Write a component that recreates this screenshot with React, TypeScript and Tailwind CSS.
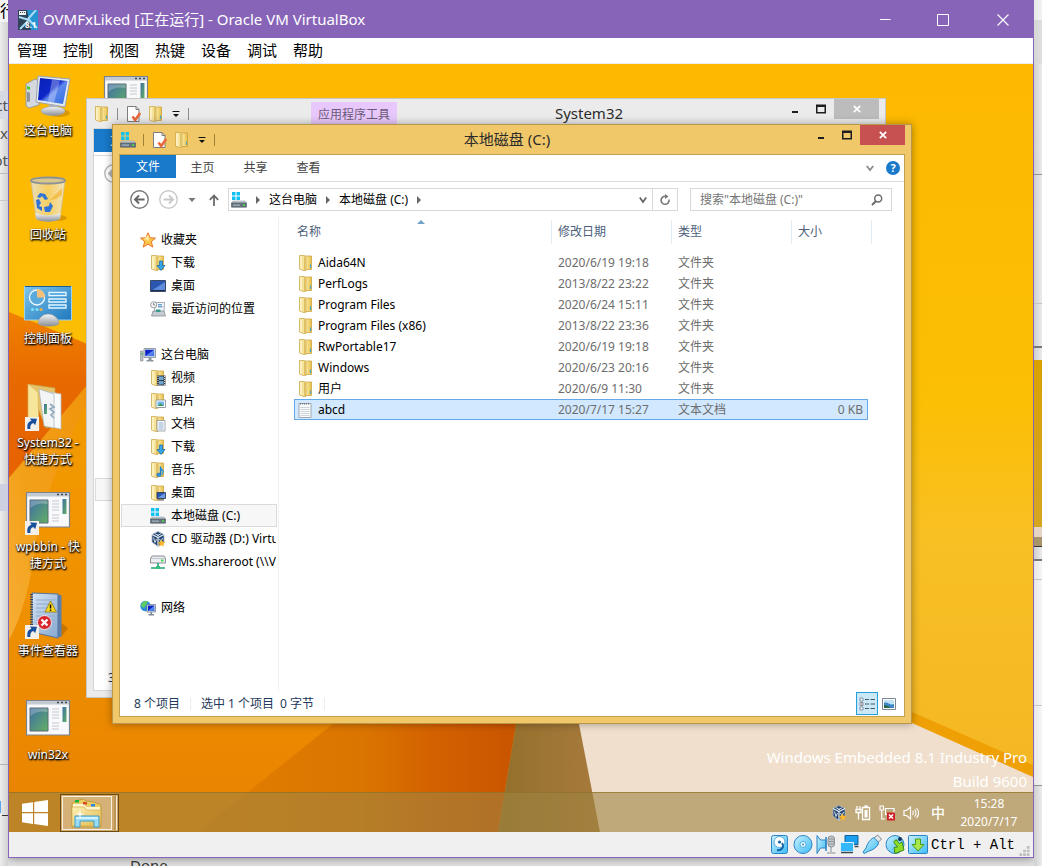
import React from "react";

const font = "font-['Noto_Sans','Noto_Sans_CJK_SC',sans-serif]";

/* ---------- shared gradients ---------- */

function Defs() {
  return (
    <svg className="absolute h-0 w-0" aria-hidden="true">
      <defs>
        <linearGradient id="folder" x1="0" x2="1" y1="0" y2="1">
          <stop offset="0" stopColor="#fdf0b4" />
          <stop offset="1" stopColor="#e2b94e" />
        </linearGradient>
        <linearGradient id="folderFront" x1="0" x2="1" y1="0" y2="0">
          <stop offset="0" stopColor="#d9a93a" />
          <stop offset="0.3" stopColor="#fbe9a0" />
          <stop offset="1" stopColor="#e6bd47" />
        </linearGradient>
        <linearGradient id="screen" x1="0" x2="1" y1="0" y2="1">
          <stop offset="0" stopColor="#0a1fb8" />
          <stop offset="0.45" stopColor="#0d27c9" />
          <stop offset="0.55" stopColor="#5f86ee" />
          <stop offset="1" stopColor="#2f6fe0" />
        </linearGradient>
        <linearGradient id="metal" x1="0" x2="0" y1="0" y2="1">
          <stop offset="0" stopColor="#f6f6f6" />
          <stop offset="1" stopColor="#8b9096" />
        </linearGradient>
        <linearGradient id="appPane" x1="0" x2="1" y1="0" y2="1">
          <stop offset="0" stopColor="#3f6fa6" />
          <stop offset="1" stopColor="#62b062" />
        </linearGradient>
        <linearGradient id="panel" x1="0" x2="1" y1="0" y2="1">
          <stop offset="0" stopColor="#7cc4ec" />
          <stop offset="1" stopColor="#1f78bd" />
        </linearGradient>
        <linearGradient id="glass" x1="0" x2="1" y1="0" y2="0">
          <stop offset="0" stopColor="#e6e2cf" stopOpacity="0.9" />
          <stop offset="0.5" stopColor="#f5d88c" stopOpacity="0.7" />
          <stop offset="1" stopColor="#efe9d5" stopOpacity="0.9" />
        </linearGradient>
        <linearGradient id="sky" x1="0" x2="1" y1="0" y2="1">
          <stop offset="0" stopColor="#c8f1ff" />
          <stop offset="1" stopColor="#3cbcf5" />
        </linearGradient>
        <linearGradient id="book" x1="0" x2="1" y1="0" y2="1">
          <stop offset="0" stopColor="#d5e3f2" />
          <stop offset="1" stopColor="#86a8cf" />
        </linearGradient>
      </defs>
    </svg>
  );
}

/* ---------- wallpaper ---------- */

function Wallpaper() {
  return (
    <svg
      className="absolute inset-0 h-full w-full"
      viewBox="0 0 1024 768"
      preserveAspectRatio="none"
      aria-hidden="true"
    >
      <defs>
        <linearGradient id="wpBase" x1="0" x2="0" y1="0" y2="1">
          <stop offset="0" stopColor="#fdb900" />
          <stop offset="0.45" stopColor="#fbbf06" />
          <stop offset="0.62" stopColor="#f8c024" />
          <stop offset="0.9" stopColor="#f5b824" />
        </linearGradient>
        <linearGradient id="wpLeft" x1="0" x2="0" y1="0" y2="1">
          <stop offset="0" stopColor="#f59e00" />
          <stop offset="0.6" stopColor="#ee8f00" />
          <stop offset="1" stopColor="#e88200" />
        </linearGradient>
        <linearGradient id="wpFold" x1="0" x2="1" y1="0" y2="0">
          <stop offset="0" stopColor="#e27f00" />
          <stop offset="0.5" stopColor="#da7500" />
          <stop offset="0.7" stopColor="#d46200" />
          <stop offset="1" stopColor="#c85200" />
        </linearGradient>
        <linearGradient id="wpDark" x1="0" x2="0" y1="0" y2="1">
          <stop offset="0" stopColor="#f08200" />
          <stop offset="0.4" stopColor="#e86900" />
          <stop offset="1" stopColor="#e66200" />
        </linearGradient>
        <linearGradient id="wpBrown" x1="0" x2="1" y1="0" y2="0">
          <stop offset="0" stopColor="#93702c" />
          <stop offset="1" stopColor="#a87a3c" />
        </linearGradient>
        <linearGradient id="wpWedge" x1="1" x2="0" y1="0" y2="1">
          <stop offset="0" stopColor="#f0940a" />
          <stop offset="0.6" stopColor="#f3a11a" />
          <stop offset="1" stopColor="#f7ae34" />
        </linearGradient>
      </defs>
      <rect width="1024" height="768" fill="url(#wpBase)" />
      <path d="M0 414 105 280 600 280 490 768 0 768Z" fill="url(#wpLeft)" />
      <path d="M0 248 108 292 0 414Z" fill="url(#wpDark)" />
      <path d="M0 414 78 321 78 340Q45 400 28 470 20 540 0 576Z" fill="url(#wpWedge)" />
      <path d="M520 490 324 660 189 768 489 768 507 660Z" fill="url(#wpFold)" />
      <path d="M507 660 540 480 591 768 489 768Z" fill="url(#wpBrown)" />
      <path d="M570 660 560 560 903 650 1024 704 1024 768 591 768Z" fill="#f0dfcd" />
      <path d="M880 638 1024 701 1024 713 903 659 880 650Z" fill="#efa004" />
    </svg>
  );
}

/* ---------- small icons (16px) ---------- */

function FolderIcon({ children }: { children?: React.ReactNode }) {
  return (
    <svg viewBox="0 0 16 16" className="h-4 w-4 shrink-0" aria-hidden="true">
      <path d="M6 1h7.500v13.500H6z" fill="url(#folderFront)" stroke="#c99e35" strokeWidth=".7" />
      <path d="M1.500.5H6l2 1.500v13.500l-2 .3-4.500-1.800z" fill="#f6e39a" stroke="#c9a243" strokeWidth=".7" />
      <path d="M3 1.500v12.500" stroke="#fff6cf" strokeWidth="1.400" />
      <path d="M6.800 2v13" stroke="#d8b04a" strokeWidth="1" />
      <path d="M12.500 9.500v3.500" stroke="#4fa7c4" strokeWidth="1.200" />
      {children}
    </svg>
  );
}

const DownloadFolder = () => (
  <FolderIcon>
    <path d="M9.500 6h3v4.500h2.500L11 15.500 7 10.500h2.500z" fill="#35a6ea" stroke="#1167a8" strokeWidth=".7" />
  </FolderIcon>
);
const VideoFolder = () => (
  <FolderIcon>
    <path d="M7 5.500h8.500v10H7z" fill="#333a44" />
    <path d="M9 6.500h4.500v3.500H9zM9 11h4.500v3.500H9z" fill="#6fa6d2" />
    <path d="M8 6v9.500M14.600 6v9.500" stroke="#fff" strokeWidth=".9" strokeDasharray="1 1" />
  </FolderIcon>
);
const PictureFolder = () => (
  <FolderIcon>
    <path d="M6 7h9.500v7.500H6z" fill="#fff" stroke="#7f8c96" strokeWidth=".8" />
    <path d="M7.500 8.500h6.500v4.500H7.500z" fill="#6cb6e8" />
    <path d="m7.500 13 3-2.500 3.500 2.500z" fill="#3d9a5b" />
  </FolderIcon>
);
const DocFolder = () => (
  <FolderIcon>
    <path d="M7 4.500h8v10.500H7z" fill="#fff" stroke="#8b949c" strokeWidth=".8" />
    <path d="M8.500 7h5M8.500 9h5M8.500 11h5M8.500 13h5" stroke="#6c93c0" strokeWidth=".8" />
  </FolderIcon>
);
const MusicFolder = () => (
  <FolderIcon>
    <path d="M10.500 4.500v7.500" stroke="#1878c8" strokeWidth="1.400" />
    <path d="M10.500 4.500c1 3 4 3 3.500 7-.5-2-2-2.500-3.500-3z" fill="#2a95e2" />
    <ellipse cx="9" cy="12.800" rx="2.300" ry="1.800" fill="#2a95e2" stroke="#115c9c" strokeWidth=".5" />
  </FolderIcon>
);
const DesktopFolder = () => (
  <FolderIcon>
    <path d="M7 7.500h8.500v6H7z" fill="#2a56b4" stroke="#22344f" strokeWidth=".8" />
    <path d="m7.500 13 7.500-5v5z" fill="#6f9be0" />
    <path d="M8 15h6" stroke="#58616c" />
  </FolderIcon>
);
const StarIcon = () => (
  <svg viewBox="0 0 16 16" className="h-4 w-4 shrink-0" aria-hidden="true">
    <path
      d="m8 .8 2.200 5 5.300.3-4.200 3.500 1.500 5.500L8 12.200l-4.800 2.900 1.500-5.500L.5 6.100l5.300-.3z"
      fill="#fdc648"
      stroke="#e2762a"
      strokeWidth="1"
      strokeLinejoin="round"
    />
    <path d="m8 3 1.300 3.500L8 9 4 7z" fill="#ffe9a0" />
  </svg>
);
const DesktopIcon = () => (
  <svg viewBox="0 0 16 16" className="h-4 w-4 shrink-0" aria-hidden="true">
    <path d="M.5 2.500h15v11H.5z" fill="#2a57b0" stroke="#3a4a66" />
    <path d="m1 13 14-9v9z" fill="#5f8ddb" />
    <path d="M1 12.500h14" stroke="#1b2c4a" />
  </svg>
);
const RecentIcon = () => (
  <svg viewBox="0 0 16 16" className="h-4 w-4 shrink-0" aria-hidden="true">
    <path d="M5 1.500h9.500l-.5 9H4.500z" fill="#f7f9fb" stroke="#8a949e" strokeWidth=".8" />
    <path d="M8 3.800h4M8 5.800h4.500" stroke="#2e7bc4" />
    <path d="M3 10h11l1.500 5H1.500z" fill="#c6ccd2" stroke="#868e96" strokeWidth=".8" />
    <path d="M6 8.500h4.500v2.500H6z" fill="#3a9a8a" />
    <circle cx="3.700" cy="3.800" r="3.100" fill="#f5f5f5" stroke="#8d949b" strokeWidth=".9" />
    <path d="M3.700 2v2h1.500" stroke="#555" strokeWidth=".7" fill="none" />
  </svg>
);
const ComputerIcon = () => (
  <svg viewBox="0 0 16 16" className="h-4 w-4 shrink-0" aria-hidden="true">
    <path d="M.5 4h2.500v10H.5z" fill="#b9c0c7" stroke="#7d858d" strokeWidth=".6" />
    <path d="M1 6h1.500v1.500H1z" fill="#35c235" />
    <path d="M4 1.500h11.500v9H4z" fill="#dfe5eb" stroke="#7c8894" strokeWidth=".8" />
    <path d="M5.200 2.700h9v6.500h-9z" fill="url(#screen)" />
    <path d="M8.500 11h3v2h2v1.500h-7V13h2z" fill="#8a949d" />
  </svg>
);
const DriveIcon = () => (
  <svg viewBox="0 0 16 16" className="h-4 w-4 shrink-0" aria-hidden="true">
    <path d="M1 0h3.500v3.500H1zM5.500 0H9v3.500H5.500zM1 4.500h3.500V8H1zM5.500 4.500H9V8H5.500z" fill="#12c0f2" />
    <path d="M2 9h12l1.500 2H.5z" fill="#c8d0d6" stroke="#87919a" strokeWidth=".5" />
    <path d="M.5 11h15v4.200H.5z" fill="#66727d" stroke="#4d5862" strokeWidth=".6" />
    <path d="M2 12.500h7v1.300H2z" fill="#9fb3c2" />
    <path d="M12 12.300h2v1.700h-2z" fill="#45d845" />
  </svg>
);
const CubeIcon = () => (
  <svg viewBox="0 0 16 16" className="h-4 w-4 shrink-0" aria-hidden="true">
    <path d="m8 .5 6 3v7.500l-6 4.500-6-4.500V3.500z" fill="#27466f" stroke="#a9b6c9" strokeWidth=".8" />
    <path d="m2 3.500 6 3 6-3M8 6.500v9" stroke="#e6edf5" strokeWidth="1.200" fill="none" />
    <path d="m3.500 6.500 1.500 5 1.500-3.500M9.500 8l1.500 3 1.500-4M5 2.700l4 2.100M11 2.700 7 4.800" stroke="#d3deec" fill="none" />
    <path d="m11.500 8.500 1.200 2.300 2.800.2-2 1.800.6 2.700-2.600-1.300-2.500 1.300.6-2.700-2-1.800 2.700-.2z" fill="#f8b72c" />
  </svg>
);
const NetDriveIcon = () => (
  <svg viewBox="0 0 16 16" className="h-4 w-4 shrink-0" aria-hidden="true">
    <path d="M2 2h12l1.500 2.500v4.500H.5V4.500z" fill="#eceff1" stroke="#6c757d" strokeWidth=".8" />
    <path d="M.5 4.500h15" stroke="#a8b0b8" strokeWidth=".6" />
    <path d="M11 5.500h2.500v2H11z" fill="#45d845" />
    <path d="M8 9v4.500M1 14h14" stroke="#23a46c" strokeWidth="1.600" />
    <path d="M6 12h4v3H6z" fill="#35bd82" />
  </svg>
);
const NetworkIcon = () => (
  <svg viewBox="0 0 16 16" className="h-4 w-4 shrink-0" aria-hidden="true">
    <circle cx="5.500" cy="6" r="5.200" fill="#2b8fd8" />
    <path d="M2 3c2-2 5-2.500 6-1.500L6 5 4 8 1 6z" fill="#5fce5f" />
    <path d="M7 4.500h8.500v7.500H7z" fill="#dfe5eb" stroke="#6c7782" strokeWidth=".7" />
    <path d="M8 5.500h6.500v5.500H8z" fill="url(#screen)" />
    <path d="M10.500 12h1.500v2h2v1.500H8.500V14h2z" fill="#7c8894" />
  </svg>
);
const TextFileIcon = () => (
  <svg viewBox="0 0 16 16" className="h-4 w-4 shrink-0" aria-hidden="true">
    <path d="M1 1.500h12V15.500H1z" fill="#fafafa" stroke="#8f979f" strokeWidth=".8" />
    <path d="M2.500 5.500h9M2.500 7.500h9M2.500 9.500h9M2.500 11.500h9M2.500 13.500h9" stroke="#c3cbd2" strokeWidth=".8" />
    <path d="M2 1.800h10" stroke="#6d757d" strokeWidth="1.600" strokeDasharray="1 1" />
  </svg>
);
const PropertiesIcon = () => (
  <svg viewBox="0 0 16 16" className="h-4 w-4 shrink-0" aria-hidden="true">
    <path d="M1.500.5h8.500l3 3v12H1.500z" fill="#fff" stroke="#7d7d7d" />
    <path d="M10 .5v3h3" fill="none" stroke="#7d7d7d" />
    <path d="m6.500 10.500 2.700 3.500 5-7" fill="none" stroke="#e8683c" strokeWidth="2.600" />
  </svg>
);

/* ---------- desktop icons (48px) ---------- */

const ShortcutArrow = () => (
  <g>
    <path d="M1 33h14v14H1z" fill="#f3f0ea" />
    <path d="M3.500 45c-1-6 2-8 4-8l-1.500-2.500 7 .3-1.800 6.400-1.500-2c-2 0-4 1.800-3.200 5.800z" fill="#184f9c" />
  </g>
);

function AppGlyph({ shortcut }: { shortcut?: boolean }) {
  return (
    <svg viewBox="0 0 48 48" className="h-12 w-12" aria-hidden="true">
      <path d="M2.500 4.500h43V39h-43z" fill="#f8f9fa" stroke="#7b848e" strokeWidth="1.200" />
      <path d="M3 5h42v3.500H3z" fill="#c3cad1" />
      <path d="M33 6.500h2m2 0h2m2 0h2" stroke="#3f4850" strokeWidth="1.500" />
      <path d="M6 12h18v23H6z" fill="url(#appPane)" stroke="#5b6a76" />
      <path d="M6.500 20C12 15 18 15 23.500 16V12.500h-17z" fill="#fff" fillOpacity=".25" />
      <path d="M28 13h7M28 16h7M28 19h7M28 22h7M28 27h7M28 30h7M28 33h7" stroke="#c4c8cc" />
      <path d="M38.500 11h4v15h-4z" fill="url(#appPane)" />
      {shortcut && <ShortcutArrow />}
    </svg>
  );
}

const PcGlyph = () => (
  <svg viewBox="0 0 48 48" className="h-12 w-12" aria-hidden="true">
    <ellipse cx="35" cy="41" rx="11" ry="4" fill="#a56a00" fillOpacity=".4" />
    <path d="m2 12 9-5 4 2v24l-10 3-3-2z" fill="#d5d9dd" stroke="#8a9097" strokeWidth=".8" />
    <path d="m3 14 3 1v3l-3-1z" fill="#44d12b" />
    <path d="m3 20 3 .6v9L3 30z" fill="#8d949b" />
    <path d="m14 4 32 3-5 28-29-5z" fill="#e6eaee" stroke="#9aa4ae" />
    <path d="m16 6 27.500 3-4.500 23-25-4z" fill="url(#screen)" />
    <path d="m28 7.500 8 1-6 22-6-1z" fill="#fff" fillOpacity=".3" />
    <path d="m25 32 9 1.500-1 5h-7z" fill="#aab1b8" />
    <ellipse cx="29" cy="39" rx="12" ry="4.500" fill="url(#metal)" stroke="#9ba1a7" strokeWidth=".6" />
  </svg>
);
const RecycleGlyph = () => (
  <svg viewBox="0 0 48 48" className="h-12 w-12" aria-hidden="true">
    <ellipse cx="34" cy="42" rx="9" ry="3" fill="#a56a00" fillOpacity=".4" />
    <path d="m7 4 5 38c4 4 20 4 24 0l5-38z" fill="url(#glass)" stroke="#cfc39a" strokeWidth=".8" />
    <path d="m11.500 37 .7 6c4 3.500 19 3.500 23.500 0l.8-6c-6 3-19 3-25 0z" fill="url(#metal)" />
    <ellipse cx="24" cy="4.500" rx="17" ry="3" fill="#d9c88c" stroke="#8d9296" strokeWidth="1.800" />
    <path d="m16 17 5 1 3 5-3 1-3-4-2 2-3-1zM12 24l3-1 2 4-2 3 3 1 0 4-5-3zM20 31l5-1 1-4 3 4-3 6h-5z" fill="#2f73d4" />
    <path d="m38 12-12 12 6-1 6-4z" fill="#f3a50a" fillOpacity=".5" />
  </svg>
);
const ControlGlyph = () => (
  <svg viewBox="0 0 48 48" className="h-12 w-12" aria-hidden="true">
    <path d="M.5 6.500h47V40H.5z" fill="url(#panel)" stroke="#9ad2f0" />
    <path d="M1 6.500h46" stroke="#1c5f96" />
    <circle cx="13" cy="17.500" r="7.500" fill="#5aa9dc" stroke="#f0f8fd" strokeWidth="1.300" />
    <path d="M13 17.500V9a8 8 0 0 1 8 8.500z" fill="#f9c078" />
    <path d="M25 12.500h17v3H25zM25 19h17v3H25zM25 25h17v3H25z" fill="#2f9be0" stroke="#e9f6fd" strokeWidth="1.300" />
    <circle cx="8.500" cy="29.500" r="1.500" fill="#7de4ff" />
    <circle cx="13" cy="29.500" r="1.500" fill="#7de4ff" />
    <circle cx="17" cy="29.500" r="1.500" fill="#fdb13a" />
    <path d="M14 44c0-7 6-10 10-10s11 3 11 10c-5 3-16 3-21 0z" fill="url(#metal)" stroke="#8d9499" strokeWidth=".5" />
  </svg>
);
const FolderGlyph = () => (
  <svg viewBox="0 0 48 48" className="h-12 w-12" aria-hidden="true">
    <path d="m4 0 27 4v38l-9 2z" fill="#e5c36a" stroke="#c69c3f" strokeWidth=".7" />
    <path d="m20 7 17 3v35l-10-2z" fill="#f9fafb" stroke="#b8bec4" strokeWidth=".7" />
    <path d="m15 5 15 5v34l-10-2z" fill="#f2f4f6" stroke="#aab1b8" strokeWidth=".7" />
    <path d="m26 20 4 3-4 2 4 3-3 3 3 3" fill="none" stroke="#8fa9bd" strokeWidth="1.600" />
    <path d="M20 20h3v10h-3z" fill="url(#appPane)" />
    <path d="m4 0 10 8 1 38-11-5z" fill="#f8e59c" stroke="#d5b459" strokeWidth=".7" />
    <ShortcutArrow />
  </svg>
);
const EventGlyph = () => (
  <svg viewBox="0 0 48 48" className="h-12 w-12" aria-hidden="true">
    <path d="m36 30 8 6-6 8z" fill="#8d4e00" fillOpacity=".4" />
    <path d="m33 2 4.500 1.500v41L33 46z" fill="#5b7eab" />
    <path d="m8 1 26 1v44L8 40z" fill="url(#book)" stroke="#54749c" />
    <path d="M12 8h19M12 12h19M12 16h19M12 20h19M12 24h19M12 28h19M12 32h19" stroke="#8facd0" />
    <path d="M7.500 2v36" stroke="#3c4650" strokeWidth="3" strokeDasharray="1 1.500" />
    <path d="m26.500 9 6 11H21z" fill="#ffd91c" stroke="#8a6d00" strokeWidth=".7" />
    <path d="M26.500 12.500v4M26.500 17.500v1.500" stroke="#111" strokeWidth="1.500" />
    <circle cx="20.500" cy="30.500" r="7" fill="#d6282c" stroke="#fff" strokeWidth=".8" />
    <path d="m17.500 27.500 6 6m0-6-6 6" stroke="#fff" strokeWidth="2.200" />
    <ShortcutArrow />
  </svg>
);

const desktopItems: { label: string; glyph: React.ReactNode }[] = [
  { label: "这台电脑", glyph: <PcGlyph /> },
  { label: "回收站", glyph: <RecycleGlyph /> },
  { label: "控制面板", glyph: <ControlGlyph /> },
  { label: "System32 - 快捷方式", glyph: <FolderGlyph /> },
  { label: "wpbbin - 快捷方式", glyph: <AppGlyph shortcut /> },
  { label: "事件查看器", glyph: <EventGlyph /> },
  { label: "win32x", glyph: <AppGlyph /> },
  { label: "", glyph: <AppGlyph /> },
];

/* ---------- explorer window ---------- */

type ExplorerProps = {
  title: string;
  active?: boolean;
  place: string;
  icon: React.ReactNode;
  contextTab?: string;
  ribbon?: React.ReactNode;
  navBar?: React.ReactNode;
  status: React.ReactNode;
  children: React.ReactNode;
};

const Sep = ({ active }: { active?: boolean }) => (
  <span className={active ? "h-3 w-px bg-[#a08138]" : "h-3 w-px bg-[#8c8c8c]"} />
);

function ExplorerWindow({ title, active, place, icon, contextTab, ribbon, navBar, status, children }: ExplorerProps) {
  const frame = active
    ? "border-[#b8964a] bg-[#f0c869] shadow-[0_0_8px_rgba(0,0,0,0.35)]"
    : "border-[#c6c6c6] bg-[#ebebeb]";
  return (
    <section
      aria-label={title}
      className={`absolute flex h-[600px] w-[800px] flex-col border px-1.5 pb-1.5 ${frame} ${place}`}
    >
      <header className="flex h-[29px] shrink-0 items-start text-[#2b2b2b]">
        <div className="flex h-[29px] w-[98px] items-center px-px">
          {icon}
          <span className="w-[7px]" />
          <Sep active={active} />
          <span className="flex items-center gap-1.5 px-2">
            <PropertiesIcon />
            <FolderIcon />
          </span>
          <svg viewBox="0 0 8 8" className="mr-2 h-2 w-2" aria-hidden="true">
            <path d="M.5 1.500h7" stroke="#111" />
            <path d="M1 4h6L4 7z" fill="#111" />
          </svg>
          <Sep active={active} />
        </div>
        {contextTab && (
          <span className="ml-[120px] mt-[3px] flex h-[26px] w-[86px] items-center justify-center bg-[#e8c8fc] text-xs text-[#6b5a78]">
            {contextTab}
          </span>
        )}
        <h2 className="flex h-[29px] flex-1 items-center justify-center text-[15px]">{title}</h2>
        <div className={`flex items-start justify-end ${active ? "w-[108px]" : "w-[98px]"}`}>
          <button type="button" aria-label="最小化" className="flex h-5 w-[26px] items-center justify-center">
            <svg viewBox="0 0 12 12" className="h-3 w-3" aria-hidden="true">
              <path d="M3 8h6v2H3z" fill="#1d1d1d" />
            </svg>
          </button>
          <button type="button" aria-label="最大化" className="flex h-5 w-[26px] items-center justify-center">
            <svg viewBox="0 0 12 12" className="h-3 w-3" aria-hidden="true">
              <path d="M1 1.500h10v9H1zM2.500 4v5h7V4z" fill="#1d1d1d" fillRule="evenodd" />
            </svg>
          </button>
          <button
            type="button"
            aria-label="关闭"
            className={`flex h-5 w-[45px] items-center justify-center ${active ? "bg-[#c75050]" : "bg-[#bcbcbc]"}`}
          >
            <svg viewBox="0 0 8 8" className="h-2 w-2" aria-hidden="true">
              <path d="m.8.8 6.400 6.400m0-6.400L.8 7.200" stroke="#fff" strokeWidth="1.700" />
            </svg>
          </button>
        </div>
      </header>
      <div
        className={`flex min-h-0 flex-1 flex-col border bg-white ${active ? "border-[#c39f50]" : "border-[#d5d5d5]"}`}
      >
        <div className="flex h-[27px] shrink-0 border-b border-[#dadbdc] text-xs text-[#444]">
          <button type="button" className="h-[23px] w-14 bg-[#1979ca] text-white">
            文件
          </button>
          {ribbon}
        </div>
        <div className="flex h-[35px] shrink-0 items-center pl-2.5 pr-3">
          <button type="button" aria-label="后退">
            <svg viewBox="0 0 19 19" className="h-[19px] w-[19px]" fill="none" aria-hidden="true">
              <circle cx="9.500" cy="9.500" r="8.700" stroke={active ? "#7a7a7a" : "#b5b5b5"} strokeWidth="1.400" />
              <path
                d="M14.500 9.500H5m4-4-4 4 4 4"
                stroke={active ? "#666666" : "#b5b5b5"}
                strokeWidth="1.900"
              />
            </svg>
          </button>
          {navBar}
        </div>
        <div className="flex min-h-0 flex-1">{children}</div>
        <footer className="flex h-[25px] shrink-0 items-center pl-3.5 text-xs text-[#1e395b]">{status}</footer>
      </div>
    </section>
  );
}

type Leaf = { label: string; icon: React.ReactNode; selected?: boolean };
type Branch = { label: string; icon: React.ReactNode; leaves: Leaf[] };

const tree: Branch[] = [
  {
    label: "收藏夹",
    icon: <StarIcon />,
    leaves: [
      { label: "下载", icon: <DownloadFolder /> },
      { label: "桌面", icon: <DesktopIcon /> },
      { label: "最近访问的位置", icon: <RecentIcon /> },
    ],
  },
  {
    label: "这台电脑",
    icon: <ComputerIcon />,
    leaves: [
      { label: "视频", icon: <VideoFolder /> },
      { label: "图片", icon: <PictureFolder /> },
      { label: "文档", icon: <DocFolder /> },
      { label: "下载", icon: <DownloadFolder /> },
      { label: "音乐", icon: <MusicFolder /> },
      { label: "桌面", icon: <DesktopFolder /> },
      { label: "本地磁盘 (C:)", icon: <DriveIcon />, selected: true },
      { label: "CD 驱动器 (D:) VirtualBox Guest Additions", icon: <CubeIcon /> },
      { label: "VMs.shareroot (\\\\VBOXSVR) (Z:)", icon: <NetDriveIcon /> },
    ],
  },
  { label: "网络", icon: <NetworkIcon />, leaves: [] },
];

const files = [
  ["Aida64N", "2020/6/19 19:18", "文件夹", ""],
  ["PerfLogs", "2013/8/22 23:22", "文件夹", ""],
  ["Program Files", "2020/6/24 15:11", "文件夹", ""],
  ["Program Files (x86)", "2013/8/22 23:36", "文件夹", ""],
  ["RwPortable17", "2020/6/19 19:18", "文件夹", ""],
  ["Windows", "2020/6/23 20:16", "文件夹", ""],
  ["用户", "2020/6/9 11:30", "文件夹", ""],
  ["abcd", "2020/7/17 15:27", "文本文档", "0 KB"],
];

function NavTree() {
  return (
    <nav className="w-[159px] shrink-0 overflow-hidden border-r border-[#f0f0f0] pl-px pt-[11px] text-xs text-black">
      <ul className="flex flex-col gap-[23px]">
        {tree.map((b) => (
          <li key={b.label}>
            <button type="button" className="flex h-[23px] w-full items-center gap-[5px] pl-[19px]">
              {b.icon}
              {b.label}
            </button>
            <ul>
              {b.leaves.map((l) => (
                <li key={l.label}>
                  <button
                    type="button"
                    className={`flex h-[23px] w-[156px] items-center gap-[5px] overflow-hidden whitespace-nowrap border pl-7 ${
                      l.selected ? "border-[#dadada] bg-[#f7f7f7]" : "border-transparent"
                    }`}
                  >
                    {l.icon}
                    {l.label}
                  </button>
                </li>
              ))}
            </ul>
          </li>
        ))}
      </ul>
    </nav>
  );
}

function FileTable() {
  const heads = ["名称", "修改日期", "类型", "大小"];
  return (
    <div className="min-w-0 flex-1 pl-[15px]">
      <table className="w-[574px] table-fixed border-separate border-spacing-0 text-left text-xs">
        <colgroup>
          <col className="w-[258px]" />
          <col className="w-[120px]" />
          <col className="w-[120px]" />
          <col className="w-[76px]" />
        </colgroup>
        <thead>
          <tr className="h-[35px] align-top text-[#4c607a]">
            {heads.map((h, i) => (
              <th key={h} scope="col" className="relative p-0 pt-[3px] font-normal">
                <div
                  className={`flex h-6 items-center border-r border-[#e3ebf3] ${i === 0 ? "pl-[3px]" : "pl-1.5"} ${
                    i === 3 ? "-mr-1" : ""
                  }`}
                >
                  {h}
                </div>
                {i === 0 && (
                  <svg viewBox="0 0 8 4" className="absolute left-[123px] top-[3px] h-1 w-2" aria-hidden="true">
                    <path d="M0 4 4 0l4 4z" fill="#6fa3c8" />
                  </svg>
                )}
              </th>
            ))}
          </tr>
        </thead>
        <tbody>
          {files.map(([name, date, kind, size]) => {
            const sel = name === "abcd";
            const cell = sel ? "border-y border-[#66a7e8] bg-[#d1e8ff]" : "";
            return (
              <tr key={name} className="h-[21px] text-[#6d6d6d]">
                <td className={`p-0 text-black ${cell} ${sel ? "border-l pl-[3px]" : "pl-1"}`}>
                  <span className="flex items-center gap-1">
                    {sel ? <TextFileIcon /> : <FolderIcon />}
                    {name}
                  </span>
                </td>
                <td className={`p-0 pl-1.5 ${cell}`}>{date}</td>
                <td className={`p-0 pl-1.5 ${cell}`}>{kind}</td>
                <td className={`p-0 pr-1 text-right ${cell} ${sel ? "border-r" : ""}`}>{size}</td>
              </tr>
            );
          })}
        </tbody>
      </table>
    </div>
  );
}

const Crumb = () => (
  <svg viewBox="0 0 6 8" className="h-2 w-1.5 shrink-0" aria-hidden="true">
    <path d="M1 0v8l4-4z" fill="#666" />
  </svg>
);

function AddressRow() {
  return (
    <>
      <button type="button" aria-label="前进" className="ml-2.5">
        <svg viewBox="0 0 19 19" className="h-[19px] w-[19px]" fill="none" aria-hidden="true">
          <circle cx="9.500" cy="9.500" r="8.700" stroke="#c9c9c9" strokeWidth="1.400" />
          <path d="M4.500 9.500H14m-4-4 4 4-4 4" stroke="#c9c9c9" strokeWidth="1.900" />
        </svg>
      </button>
      <button type="button" aria-label="最近位置" className="ml-2.5">
        <svg viewBox="0 0 8 4" className="h-1 w-2" aria-hidden="true">
          <path d="M.5 0h7L4 4z" fill="#777" />
        </svg>
      </button>
      <button type="button" aria-label="上移" className="ml-3">
        <svg viewBox="0 0 12 12" className="h-3 w-3" fill="none" stroke="#6a6a6a" strokeWidth="1.800" aria-hidden="true">
          <path d="M6 12V1.500M1.800 5.800 6 1.500l4.200 4.300" />
        </svg>
      </button>
      <div className="ml-2 flex h-[23px] flex-1 items-center border border-[#d9d9d9] text-xs text-black">
        <span className="pl-0.5">
          <DriveIcon />
        </span>
        <span className="flex flex-1 items-center gap-2 pl-2">
          <Crumb />
          <button type="button">这台电脑</button>
          <Crumb />
          <button type="button">本地磁盘 (C:)</button>
          <Crumb />
        </span>
        <button type="button" aria-label="历史记录" className="mr-[5px]">
          <svg viewBox="0 0 8 8" className="h-2 w-2" fill="none" stroke="#666" strokeWidth="1.800" aria-hidden="true">
            <path d="m.8 1.500 3.200 4.500 3.200-4.500" />
          </svg>
        </button>
        <button
          type="button"
          aria-label="刷新"
          className="flex h-full w-[25px] items-center justify-center border-l border-[#d9d9d9]"
        >
          <svg viewBox="0 0 12 12" className="h-3 w-3" fill="none" stroke="#777" strokeWidth="1.600" aria-hidden="true">
            <path d="M10 5.500a4 4 0 1 1-3.500-3.200" />
            <path d="M6 0v5l3.500-2.500z" fill="#777" stroke="none" />
          </svg>
        </button>
      </div>
      <label className="ml-3 flex h-[23px] w-[202px] items-center border border-[#d9d9d9] pl-[9px] pr-2">
        <input
          type="text"
          aria-label="搜索"
          placeholder='搜索"本地磁盘 (C:)"'
          className="min-w-0 flex-1 bg-transparent text-xs outline-none placeholder:text-[#757575]"
        />
        <svg viewBox="0 0 12 12" className="h-3 w-3" fill="none" stroke="#6b6b6b" aria-hidden="true">
          <circle cx="7.200" cy="4.500" r="3.500" strokeWidth="1.500" />
          <path d="M4.800 7.200 1 11" strokeWidth="2" />
        </svg>
      </label>
    </>
  );
}

/* ---------- taskbar ---------- */

function Taskbar() {
  return (
    <div className="absolute inset-x-0 bottom-0 flex h-10 items-center border-t border-[#8f7026]/70 bg-[rgba(158,131,65,0.6)] text-white">
      <button type="button" aria-label="开始" className="flex w-[51px] justify-center">
        <svg viewBox="0 0 26 26" className="h-[26px] w-[26px]" aria-hidden="true">
          <path d="M0 3.700 11 2.200V12H0zM12.200 2 26 0v12H12.200zM0 13.200h11V24L0 22.300zM12.200 13.200H26V26l-13.800-2z" fill="#fff" />
        </svg>
      </button>
      <button
        type="button"
        aria-label="文件资源管理器"
        className="flex h-[38px] w-[59px] border border-[#6d4b10] bg-white/30 p-px"
      >
        <span className="flex h-full flex-1 items-center justify-center border border-white/80 bg-white/10">
          <svg viewBox="0 0 32 30" className="h-[30px] w-8" aria-hidden="true">
            <path d="M4 3 12 1l3 2 8 1 7 3v22H1V6z" fill="#eccb62" stroke="#b48f2e" strokeWidth=".7" />
            <path d="M2 6h11l2 3h14v6H2z" fill="#fff6cf" />
            <path d="M4 2h4v2.500H4z" fill="#1cb13c" />
            <path d="M12 4h4v2.500h-4z" fill="#da4a26" />
            <path d="M20 6h4v2.500h-4z" fill="#2a87dd" />
            <path d="M1 9h12l3 3h14v16H1z" fill="url(#folder)" stroke="#c9a23e" strokeWidth=".6" />
            <path d="M4 18h24v11h-5v-6H9v6H4z" fill="#9bdcf5" stroke="#3f9ecb" />
            <path d="M5 20h22" stroke="#e3f8ff" strokeWidth="1.500" />
            <path d="m9 11 .8 4.200L14 16l-4.200.8L9 21l-.8-4.200L4 16l4.200-.8z" fill="#fff" />
          </svg>
        </span>
        <span className="ml-0.5 h-full w-[3px] border-r border-white/80 bg-[#6d4b10]/20" />
      </button>
      <div className="ml-auto flex items-center gap-2 pr-3">
        <CubeIcon />
        <svg viewBox="0 0 16 16" className="h-4 w-4" fill="none" stroke="#fff" aria-hidden="true">
          <path d="M7.500 2.500h7v12h-7zM9.500 1h3" strokeWidth="1.300" />
          <path d="M9.500 5h3v7.500h-3z" fill="#fff" stroke="none" />
          <path d="M2 1v3M5 1v3M1 4.500h5v3H1zM3.500 7.500v7" strokeWidth="1.300" />
        </svg>
        <svg viewBox="0 0 16 16" className="h-4 w-4" fill="none" stroke="#fff" aria-hidden="true">
          <path d="M1 1h3.500v4H1zM2.700 5v9H6M6.500 3.500h8.500v6H6.500z" strokeWidth="1.200" />
          <path d="M8 7.500h8v8H8z" fill="#cf2028" stroke="none" />
          <path d="m10 9.500 4 4m0-4-4 4" strokeWidth="1.500" />
        </svg>
        <svg viewBox="0 0 16 16" className="h-4 w-4" fill="none" stroke="#fff" aria-hidden="true">
          <path d="M1 5.500h2.500L7.500 2v12l-4-3.500H1z" strokeWidth="1.200" />
          <path d="M9.500 6c1 1 1 3 0 4M11.500 4.300c2 2 2 5.400 0 7.400M13.500 3c2.500 3 2.500 7 0 10" strokeWidth="1.100" />
        </svg>
        <button type="button" className="w-[22px] text-center text-sm font-medium text-white">
          中
        </button>
        <time className="w-16 text-center text-xs leading-[18px]">
          15:28
          <br />
          2020/7/17
        </time>
      </div>
    </div>
  );
}

/* ---------- host status indicators ---------- */

const hostIcons: [string, React.ReactNode][] = [
  [
    "硬盘",
    <>
      <rect x="1.500" y="1.500" width="16" height="18" rx="2" fill="url(#sky)" stroke="#2d84c4" />
      <circle cx="9.500" cy="8" r="5.500" fill="#fff" stroke="#5baada" />
      <circle cx="9.500" cy="8" r="1.600" fill="#1565a8" />
      <path d="M12 9c3 4-1 8-5 7" fill="none" stroke="#1565a8" strokeWidth="2" />
    </>,
  ],
  [
    "光驱",
    <>
      <circle cx="10" cy="10.500" r="9" fill="url(#sky)" stroke="#2d84c4" />
      <circle cx="10" cy="10.500" r="3" fill="#e8f9ff" stroke="#55aedd" />
      <circle cx="10" cy="10.500" r="1" fill="#3b8fc6" />
    </>,
  ],
  [
    "声音",
    <>
      <path d="M1 1.500 4.500 6H10v8H4.500L1 19.500z" fill="url(#sky)" stroke="#2d84c4" />
      <path d="M10 3v14" stroke="#2d84c4" strokeWidth="1.500" />
      <rect x="12" y="2" width="6.500" height="11" rx="3" fill="#c5c9cd" stroke="#8b9196" />
      <path d="M12.500 5h5.500M12.500 7.500h5.500M12.500 10h5.500M15 13v5M11 19h8.500" stroke="#8b9196" />
    </>,
  ],
  [
    "网络",
    <>
      <path d="M6 1.500h13v9H6z" fill="#1aa0ee" stroke="#0e5f9c" />
      <path d="M1.500 8.500h13v9h-13z" fill="#35b8fb" stroke="#dff3fe" />
      <path d="M2 18.500h12M15.500 12.500h4" stroke="#3a4650" strokeWidth="1.500" />
    </>,
  ],
  [
    "USB",
    <>
      <path d="m12 4 3.500-3L19.500 5 16 8.500z" fill="#e6e8ea" stroke="#7b838a" />
      <path d="M9 5.500c2-2 3-2 4-1l3 3.500c1 1 0 3-1 4-3 3.500-5 4-8 5L2 19.500 1 18l3-4c1-3 2-5.500 5-8.500z" fill="url(#sky)" stroke="#2d84c4" />
    </>,
  ],
  [
    "共享",
    <>
      <circle cx="10" cy="10.500" r="9" fill="url(#sky)" stroke="#2d84c4" />
      <path d="M12 6c-3 0-4 2-2 4l2.500 3-3.500.5 1 6 9-3.500-2-8-2.500 1.500C13 8 12.500 7.500 12 6z" fill="#8fdc28" stroke="#3f8a13" />
      <circle cx="15" cy="5" r="2" fill="#16335c" />
    </>,
  ],
  [
    "键盘捕获",
    <>
      <rect x=".5" y="1.500" width="19" height="18" rx="1" fill="url(#sky)" stroke="#2d84c4" />
      <path d="M7.500 5h5v5.500H16l-6 6.500-6-6.500h3.500z" fill="#a9e84a" stroke="#4b9a18" />
    </>,
  ],
];

const menus = ["管理", "控制", "视图", "热键", "设备", "调试", "帮助"];

/* ---------- page ---------- */

export default function App() {
  return (
    <div className={`relative flex h-screen min-h-[720px] w-full overflow-hidden bg-[#e4e4e4] ${font}`}>
      <Defs />

      <aside className="relative flex w-2 shrink-0 flex-col items-end overflow-hidden bg-gradient-to-r from-[#ececec] to-[#d2d2d2] text-[15px] text-[#555]">
        <span className="flex h-[22px] w-full shrink-0 items-center overflow-hidden bg-[#f5f5f5] text-base text-black">行</span>
        <span className="h-[69px] shrink-0" />
        <span className="flex h-[28px] w-full shrink-0 items-center justify-end bg-[#d6d8e4]">ct</span>
        <span className="flex h-[28px] shrink-0 items-center">lx</span>
        <span className="flex h-[27px] w-full shrink-0 items-center justify-end border-b border-[#bdbdbd]">ot</span>
        <span className="h-[27px] w-full shrink-0 border-b border-[#c8c8c8]" />
        <span className="h-[283px] shrink-0" />
        <span className="h-[27px] w-full shrink-0 bg-[#cdd0e0]" />
        <span className="h-[254px] w-full shrink-0 border-b border-[#b5b5b5]" />
        <span className="h-9 shrink-0" />
        <span className="flex h-3 w-full shrink-0">
          <span className="h-full w-px bg-[#5aa7f0]" />
        </span>
        <span className="h-[3px] w-1.5 shrink-0 border-b border-[#333]" />
      </aside>

      <div className="flex min-w-0 flex-1 flex-col">
        <main className="flex min-h-0 flex-1 flex-col border border-[#8764b8] bg-[#f0f0f0] shadow-[0_0_10px_rgba(0,0,0,0.45)]">
          <header className="flex h-[37px] shrink-0 items-center bg-[#8764b8] pl-[9px] text-white">
            <svg viewBox="0 0 20 20" className="h-5 w-5" aria-hidden="true">
              <path d="M0 0h20v20H0z" fill="#2d4356" />
              <path d="M9 0h11v20h-7z" fill="#2595d2" />
              <path d="m18 0-8 9 9 9M1 7l10 3-9 9" fill="none" stroke="#a8dcf5" strokeWidth="2" />
              <path d="M1 1h7v4H1z" fill="#eef2f5" />
              <path d="M2 2.500h5" stroke="#444" strokeDasharray="1 1" />
              <text x="7" y="18" fontSize="8" fontWeight="700" fill="#fff">
                8.1
              </text>
            </svg>
            <h1 className="ml-[5px] flex-1 truncate text-[15px]">OVMFxLiked [正在运行] - Oracle VM VirtualBox</h1>
            <div className="flex h-full">
              <button type="button" aria-label="最小化" className="flex w-[58px] items-center justify-center">
                <svg viewBox="0 0 12 12" className="h-3 w-3" aria-hidden="true">
                  <path d="M1 5.500h10.500" stroke="#fff" />
                </svg>
              </button>
              <button type="button" aria-label="最大化" className="flex w-[58px] items-center justify-center">
                <svg viewBox="0 0 12 12" className="h-3 w-3" fill="none" stroke="#fff" aria-hidden="true">
                  <path d="M.5.5h11v11H.5z" />
                </svg>
              </button>
              <button type="button" aria-label="关闭" className="flex w-[61px] items-center justify-center">
                <svg viewBox="0 0 12 12" className="h-3 w-3" fill="none" stroke="#fff" strokeWidth="1.100" aria-hidden="true">
                  <path d="m.5.5 11 11m0-11-11 11" />
                </svg>
              </button>
            </div>
          </header>

          <nav className="flex h-[26px] shrink-0 items-center border-b border-[#ececec] bg-white text-[15px] text-black">
            {menus.map((m) => (
              <button key={m} type="button" className="px-2">
                {m}
              </button>
            ))}
          </nav>

          <div className="relative min-h-0 flex-1 overflow-hidden bg-[#fdb900]">
            <Wallpaper />

            <ul className="absolute left-0 top-2 grid auto-cols-[78px] grid-flow-col grid-rows-[repeat(7,104px)] text-xs leading-[17px] text-white">
              {desktopItems.map((d, i) => (
                <li key={i}>
                  <button
                    type="button"
                    aria-label={d.label || "应用程序"}
                    className="flex w-[78px] flex-col items-center gap-0.5 px-0.5 text-center [text-shadow:1px_1px_2px_#000,0_1px_2px_#000,1px_1px_1px_rgba(0,0,0,0.6)]"
                  >
                    {d.glyph}
                    <span>{d.label}</span>
                  </button>
                </li>
              ))}
            </ul>

            <p className="absolute bottom-[39px] right-1.5 text-right text-[15px] leading-6 text-white">
              Windows Embedded 8.1 Industry Pro
              <br />
              Build 9600
            </p>

            <ExplorerWindow
              title="System32"
              place="left-[77px] top-[34px]"
              icon={<FolderIcon />}
              contextTab="应用程序工具"
              status={<span>3 个项目</span>}
            >
              <div className="w-[159px] border-r border-[#f0f0f0] pl-px pt-[287px]">
                <div className="h-[23px] w-[156px] border border-[#dadada] bg-[#f7f7f7]" />
              </div>
            </ExplorerWindow>

            <ExplorerWindow
              title="本地磁盘 (C:)"
              active
              place="left-[103px] top-[60px]"
              icon={<DriveIcon />}
              ribbon={
                <>
                  <button type="button" className="w-[53px]">主页</button>
                  <button type="button" className="w-[53px]">共享</button>
                  <button type="button" className="w-[53px]">查看</button>
                  <span className="ml-auto flex items-center gap-3 pr-1">
                    <button type="button" aria-label="展开功能区">
                      <svg viewBox="0 0 8 8" className="h-2 w-2" fill="none" stroke="#8a8a8a" strokeWidth="1.800" aria-hidden="true">
                        <path d="m.8 2 3.200 4 3.200-4" />
                      </svg>
                    </button>
                    <button
                      type="button"
                      aria-label="帮助"
                      className="h-3.5 w-3.5 rounded-full bg-[#1979ca] text-[11px] font-bold leading-[14px] text-white"
                    >
                      ?
                    </button>
                  </span>
                </>
              }
              navBar={<AddressRow />}
              status={
                <>
                  <span>8 个项目</span>
                  <span className="mx-2.5 h-3 w-px bg-[#ececec]" />
                  <span className="flex gap-1.5">
                    <span>选中 1 个项目</span>
                    <span>0 字节</span>
                  </span>
                  <span className="mx-2.5 h-3 w-px bg-[#ececec]" />
                  <span className="ml-auto flex h-full items-start gap-1 pr-2 pt-px">
                    <button
                      type="button"
                      aria-label="详细信息"
                      className="flex h-[23px] w-[22px] items-center justify-center border border-[#26a0da] bg-[#cbe8f6]"
                    >
                      <svg viewBox="0 0 16 14" className="h-3.5 w-4" fill="none" aria-hidden="true">
                        <path d="M1 1h3v3H1zM1 5.500h3v3H1zM1 10h3v3H1z" fill="#fff" stroke="#8094a8" />
                        <path d="M2 7h1.500" stroke="#d33" />
                        <path d="M6 2.500h4m1.500 0H16M6 7h4m1.500 0H16M6 11.500h4m1.500 0H16" stroke="#44586e" strokeWidth="1.200" />
                      </svg>
                    </button>
                    <button type="button" aria-label="大缩略图" className="flex h-[23px] items-center">
                      <svg viewBox="0 0 14 12" className="h-3 w-3.5" aria-hidden="true">
                        <path d="M.5.5h13v11H.5z" fill="#fff" stroke="#7b8794" />
                        <path d="M2 2h10v8H2z" fill="#3c86c8" />
                        <path d="M2 5c3-2 6 3 10 1V2H2z" fill="#bfe3f6" />
                        <path d="M2 10V7c3 0 5 2 7 3z" fill="#2a6b46" />
                      </svg>
                    </button>
                  </span>
                </>
              }
            >
              <NavTree />
              <FileTable />
            </ExplorerWindow>

            <Taskbar />
          </div>

          <footer className="flex h-[25px] shrink-0 items-center justify-end gap-[3px] pr-[3px]">
            {hostIcons.map(([name, art]) => (
              <button key={name} type="button" aria-label={name} className="h-[21px] w-5">
                <svg viewBox="0 0 20 21" className="h-[21px] w-5" fill="none" aria-hidden="true">
                  {art}
                </svg>
              </button>
            ))}
            <span className="w-[85px] whitespace-pre font-['Liberation_Mono',monospace] text-sm text-black">Ctrl + Alt</span>
            <svg viewBox="0 0 11 11" className="h-[11px] w-[11px] self-end pb-px" aria-hidden="true">
              <path d="M8 0h3v3H8zM4 4h3v3H4zM8 4h3v3H8zM0 8h3v3H0zM4 8h3v3H4zM8 8h3v3H8z" fill="#bdbdbd" />
            </svg>
          </footer>
        </main>
        <div className="h-2 shrink-0 overflow-hidden pl-[122px]">
          <span className="flex h-2 items-end text-[15px] leading-[2px] text-[#333]">Done</span>
        </div>
      </div>

      <aside className="flex w-2 shrink-0 flex-col bg-gradient-to-r from-[#cfcfcf] to-[#ececec]">
        <span className="h-5 bg-[#f3f3f3]/70" />
        <span className="h-11 bg-[#d8d8d8]/70" />
        <span className="h-[111px] border-b border-[#8f8f8f]" />
        <span className="h-[129px] border-b border-[#c4c4c4]" />
        <span className="h-11 border-b-2 border-[#777]" />
        <span className="h-3" />
        <span className="h-[167px] bg-gradient-to-b from-[#d9a200] to-[#d6a520]" />
        <span className="h-2.5 bg-[#e5d5c5]" />
        <span className="h-2.5 border-b border-[#333] bg-[#a8946a]" />
        <span className="h-3.5 border-b-2 border-[#777]" />
        <span className="h-[19px] border-b border-[#c4c4c4] bg-white/50" />
        <span className="h-[126px] border-b border-[#c4c4c4] bg-white/50" />
        <span className="h-20 border-b border-[#8f8f8f] bg-white/50" />
      </aside>
    </div>
  );
}
